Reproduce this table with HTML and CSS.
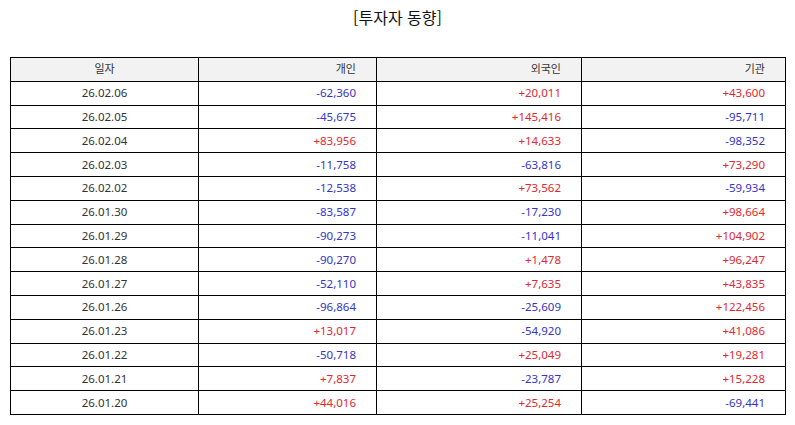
FILE: index.html
```html
<!DOCTYPE html>
<html lang="ko">
<head>
<meta charset="utf-8">
<title>투자자 동향</title>
<link rel="stylesheet" href="styles.css">
</head>
<body>
<div class="page">
  <h1 class="title">[투자자 동향]</h1>
  <table class="grid">
    <colgroup>
      <col class="c-date">
      <col class="c-ind">
      <col class="c-for">
      <col class="c-inst">
    </colgroup>
    <thead>
      <tr><th class="center">일자</th><th>개인</th><th>외국인</th><th>기관</th></tr>
    </thead>
    <tbody>
      <tr><td class="center">26.02.06</td><td class="dn">-62,360</td><td class="up">+20,011</td><td class="up">+43,600</td></tr>
      <tr><td class="center">26.02.05</td><td class="dn">-45,675</td><td class="up">+145,416</td><td class="dn">-95,711</td></tr>
      <tr><td class="center">26.02.04</td><td class="up">+83,956</td><td class="up">+14,633</td><td class="dn">-98,352</td></tr>
      <tr><td class="center">26.02.03</td><td class="dn">-11,758</td><td class="dn">-63,816</td><td class="up">+73,290</td></tr>
      <tr><td class="center">26.02.02</td><td class="dn">-12,538</td><td class="up">+73,562</td><td class="dn">-59,934</td></tr>
      <tr><td class="center">26.01.30</td><td class="dn">-83,587</td><td class="dn">-17,230</td><td class="up">+98,664</td></tr>
      <tr><td class="center">26.01.29</td><td class="dn">-90,273</td><td class="dn">-11,041</td><td class="up">+104,902</td></tr>
      <tr><td class="center">26.01.28</td><td class="dn">-90,270</td><td class="up">+1,478</td><td class="up">+96,247</td></tr>
      <tr><td class="center">26.01.27</td><td class="dn">-52,110</td><td class="up">+7,635</td><td class="up">+43,835</td></tr>
      <tr><td class="center">26.01.26</td><td class="dn">-96,864</td><td class="dn">-25,609</td><td class="up">+122,456</td></tr>
      <tr><td class="center">26.01.23</td><td class="up">+13,017</td><td class="dn">-54,920</td><td class="up">+41,086</td></tr>
      <tr><td class="center">26.01.22</td><td class="dn">-50,718</td><td class="up">+25,049</td><td class="up">+19,281</td></tr>
      <tr><td class="center">26.01.21</td><td class="up">+7,837</td><td class="dn">-23,787</td><td class="up">+15,228</td></tr>
      <tr><td class="center">26.01.20</td><td class="up">+44,016</td><td class="up">+25,254</td><td class="dn">-69,441</td></tr>
    </tbody>
  </table>
</div>
</body>
</html>
```

FILE: styles.css
```css
html, body {
  margin: 0;
  padding: 0;
  background: #ffffff;
}

.page {
  padding: 7px 10px 0 10px;
  font-family: "Noto Sans", "Noto Sans CJK KR", sans-serif;
  color: #333333;
}

.title {
  margin: 0 0 30px 0;
  font-family: "Noto Sans CJK KR", sans-serif;
  font-size: 16px;
  line-height: 20px;
  font-weight: normal;
  text-align: center;
  color: #111111;
}

.grid {
  width: 775px;
  border-collapse: collapse;
  table-layout: fixed;
  font-size: 11.5px;
}

.c-date { width: 188px; }
.c-ind { width: 178px; }
.c-for { width: 205px; }
.c-inst { width: 204px; }

.grid th,
.grid td {
  border: 1px solid #000000;
  height: 22.8px;
  padding: 0 20px 0 4px;
  text-align: right;
  font-weight: normal;
  line-height: 14px;
  vertical-align: middle;
  color: #333333;
}

.grid th {
  background: #f2f2f2;
  font-size: 11px;
}

.grid .center {
  text-align: center;
  padding: 0 4px;
}

.grid .up { color: #e3262f; }
.grid .dn { color: #3434c8; }
```
